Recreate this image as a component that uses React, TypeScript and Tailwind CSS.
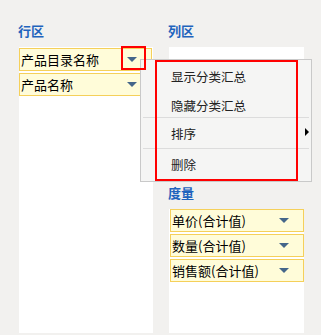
import React from "react";

const Arrow: React.FC = () => (
  <svg width="10" height="5" viewBox="0 0 10 5" className="shrink-0">
    <polygon points="0,0 10,0 5,5" fill="#45668a" />
  </svg>
);

const FieldItem: React.FC<{ label: string }> = ({ label }) => (
  <div className="flex h-[23px] items-center justify-between border border-[#f5d05a] bg-[#fffcd9] pl-px pr-[14px] text-[13px] leading-[15px] text-black">
    <span>{label}</span>
    <Arrow />
  </div>
);

const SectionLabel: React.FC<{ text: string }> = ({ text }) => (
  <div className="-ml-px h-[25px] text-[13px] font-bold leading-[18px] text-[#1f64bd]">{text}</div>
);

const menuItems = [
  { label: "显示分类汇总", cls: "h-[30px] pt-[9px]" },
  { label: "隐藏分类汇总", cls: "h-[26px] pt-[8px]" },
  { sep: true },
  { label: "排序", cls: "h-[30px] pt-[9px]", sub: true },
  { sep: true },
  { label: "删除", cls: "h-[30px] pt-[9px]" },
];

export default function App() {
  return (
    <div className="relative flex h-[335px] w-[321px] overflow-hidden bg-[#f2f1ef] pt-[22px] pb-[2px] font-['Noto_Sans_CJK_SC',sans-serif]">
      {/* 行区 */}
      <div className="ml-[19px] flex w-[134px] flex-col">
        <SectionLabel text="行区" />
        <div className="flex flex-1 flex-col gap-[2px] bg-white pt-px pr-px">
          <FieldItem label="产品目录名称" />
          <FieldItem label="产品名称" />
        </div>
      </div>

      {/* 列区 + 度量 */}
      <div className="ml-[16px] flex w-[135px] flex-col">
        <SectionLabel text="列区" />
        <div className="h-[131px] bg-white" />
        <div className="mt-[6px]">
          <SectionLabel text="度量" />
        </div>
        <div className="flex flex-1 flex-col gap-[2px] bg-white pl-px">
          <FieldItem label="单价(合计值)" />
          <FieldItem label="数量(合计值)" />
          <FieldItem label="销售额(合计值)" />
        </div>
      </div>

      {/* context menu */}
      <div className="absolute left-[140px] top-[59px] h-[123px] w-[172px] border border-[#c9c9c9] bg-[#f5f5f4] text-[12.5px] leading-[14px] text-[#222]">
        <div className="h-px" />
        {menuItems.map((m, i) =>
          m.sep ? (
            <div key={i} className="mx-[2px] h-px bg-[#dcdcdc]" />
          ) : (
            <div key={i} className={`relative pl-[30px] ${m.cls}`}>
              {m.label}
              {m.sub && (
                <svg width="4" height="8" viewBox="0 0 4 8" className="absolute right-[2px] top-[10px]">
                  <polygon points="0,0 4,4 0,8" fill="#000" />
                </svg>
              )}
            </div>
          )
        )}
      </div>

      {/* highlight boxes */}
      <div className="absolute left-[121px] top-[46px] h-[24px] w-[25px] border-2 border-[#ff0000]" />
      <div className="absolute left-[155px] top-[60px] h-[121px] w-[143px] border-2 border-[#ff0000]" />
    </div>
  );
}
